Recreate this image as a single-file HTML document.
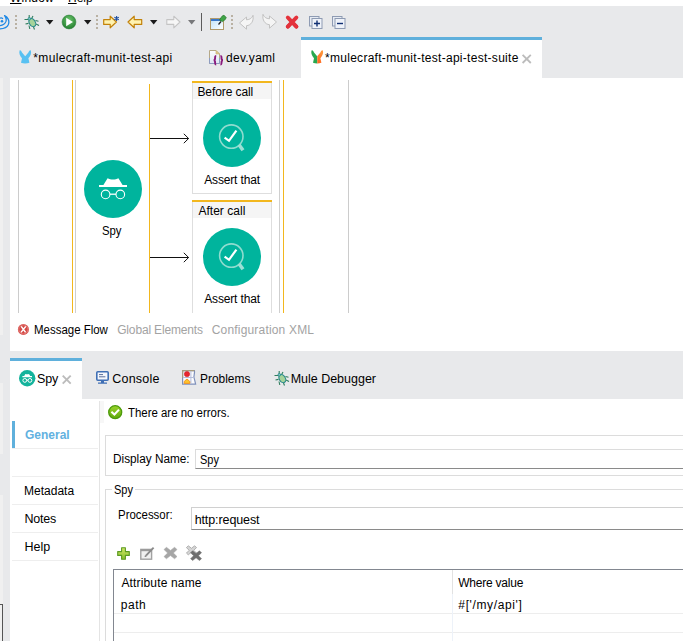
<!DOCTYPE html>
<html><head><meta charset="utf-8"><title>Studio</title>
<style>
html,body{margin:0;padding:0}
body{width:683px;height:641px;overflow:hidden;position:relative;background:#e8e9eb;font-family:"Liberation Sans",sans-serif;font-size:12px;color:#000}
.a{position:absolute}
.t{position:absolute;white-space:nowrap;line-height:14px;height:14px;transform-origin:0 0}
.w{background:#fff}
.g{color:#a3a3a3}
svg{position:absolute;overflow:visible}
</style></head><body>
<!-- menu strip -->
<div class="a w" style="left:0;top:0;width:683px;height:6px;overflow:hidden">
 <span class="t" style="left:10px;top:-9px;letter-spacing:0.2px"><u style="text-decoration-skip-ink:none">W</u>indow</span>
 <span class="t" style="left:68px;top:-9px"><u style="text-decoration-skip-ink:none">H</u>elp</span>
</div>
<!-- editor tab active -->
<div class="a w" style="left:301px;top:37px;width:241px;height:41px"></div>
<div class="a" style="left:301px;top:37px;width:241px;height:3px;background:#5fb0dc"></div>
<!-- editor area -->
<div class="a w" style="left:10px;top:78px;width:673px;height:273px"></div>
<div class="a" style="left:0;top:78px;width:3px;height:257px;background:#f0f0f0"></div>
<div class="a" style="left:0;top:383px;width:3px;height:71px;background:#f0f0f0"></div>
<div class="a" style="left:0;top:495px;width:3px;height:109px;background:#f0f0f0"></div>
<div class="a" style="left:0;top:604px;width:2px;height:38px;background:#f0f0f0;border-top:1px solid #555;border-right:1px solid #555"></div>
<!-- bottom panel -->
<div class="a w" style="left:10px;top:358px;width:72px;height:41px"></div>
<div class="a" style="left:10px;top:358px;width:72px;height:3px;background:#5fb0dc"></div>
<div class="a w" style="left:10px;top:399px;width:673px;height:242px"></div>

<!-- canvas lines -->
<div class="a" style="left:18px;top:80px;width:1px;height:233px;background:#cccccc"></div>
<div class="a" style="left:72px;top:80px;width:1px;height:233px;background:#f2b71e"></div>
<div class="a" style="left:75px;top:80px;width:1px;height:233px;background:#cfcfcf"></div>
<div class="a" style="left:149px;top:84px;width:1px;height:229px;background:#f2b71e"></div>
<div class="a" style="left:279px;top:80px;width:1px;height:233px;background:#cfcfcf"></div>
<div class="a" style="left:283px;top:80px;width:1px;height:233px;background:#f2b71e"></div>
<div class="a" style="left:348px;top:80px;width:1px;height:233px;background:#cccccc"></div>
<!-- boxes -->
<div class="a" style="left:192px;top:81px;width:78px;height:112px;border:1px solid #dedede;border-top:none;background:#fff"></div>
<div class="a" style="left:192px;top:81px;width:80px;height:2px;background:#f2b71e"></div>
<div class="a" style="left:193px;top:83px;width:78px;height:16px;background:#f5f5f5"></div>
<div class="a" style="left:192px;top:200px;width:78px;height:113px;border:1px solid #dedede;border-top:none;border-bottom:none;background:#fff"></div>
<div class="a" style="left:192px;top:200px;width:80px;height:2px;background:#f2b71e"></div>
<div class="a" style="left:193px;top:202px;width:78px;height:16px;background:#f5f5f5"></div>
<!-- arrows -->
<svg style="left:149px;top:130px" width="44" height="16"><path d="M1 8.5H39.6M34.8 3.8L39.6 8.5L34.8 13.2" fill="none" stroke="#111" stroke-width="1"/></svg>
<svg style="left:149px;top:249px" width="44" height="16"><path d="M1 8.5H39.6M34.8 3.8L39.6 8.5L34.8 13.2" fill="none" stroke="#111" stroke-width="1"/></svg>
<!-- circles -->
<div class="a" style="left:84px;top:160px;width:58px;height:58px;border-radius:50%;background:#00b49d"></div>
<div class="a" style="left:203px;top:109px;width:58px;height:58px;border-radius:50%;background:#00b49d"></div>
<div class="a" style="left:203px;top:228px;width:58px;height:58px;border-radius:50%;background:#00b49d"></div>
<!-- sidebar -->
<div class="a" style="left:12px;top:421px;width:3px;height:27px;background:#5fb0dc"></div>
<div class="a" style="left:12px;top:448px;width:86px;height:1px;background:#eeeeee"></div>
<div class="a" style="left:12px;top:476px;width:86px;height:1px;background:#eeeeee"></div>
<div class="a" style="left:12px;top:504px;width:86px;height:1px;background:#eeeeee"></div>
<div class="a" style="left:12px;top:532px;width:86px;height:1px;background:#eeeeee"></div>
<div class="a" style="left:12px;top:560px;width:86px;height:1px;background:#eeeeee"></div>
<div class="a" style="left:99px;top:401px;width:1px;height:240px;background:#e4e4e4"></div>
<!-- form -->
<div class="a" style="left:105px;top:435px;width:600px;height:39px;border:1px solid #dcdcdc"></div>
<div class="a" style="left:195px;top:449px;width:500px;height:18px;border:1px solid #dcdcdc;border-bottom:1px solid #8a8a8a"></div>
<div class="a" style="left:105px;top:489px;width:600px;height:200px;border:1px solid #dcdcdc"></div>
<div class="a w" style="left:112px;top:483px;width:23px;height:14px"></div>
<div class="a" style="left:191px;top:507px;width:500px;height:21px;border:1px solid #d0d0d0;border-bottom:1px solid #8a8a8a"></div>
<!-- table -->
<div class="a" style="left:113px;top:569px;width:600px;height:100px;border:1px solid #828790"></div>
<div class="a" style="left:114px;top:613px;width:600px;height:1px;background:#ededed"></div>
<div class="a" style="left:114px;top:632px;width:600px;height:1px;background:#ededed"></div>
<div class="a" style="left:452px;top:570px;width:1px;height:24px;background:#e2e2e2"></div><div class="a" style="left:452px;top:594px;width:1px;height:50px;background:#edf2f9"></div>

<!-- toolbar -->
<svg style="left:0;top:14px" width="11" height="16"><path d="M4.6 1.6C7.6 3 9.8 6.6 8.4 10.4 7.2 13.2 3.6 14.8-1 14.8M-1 11.6C2 11.6 5 10.2 6 7.4 6.6 5.4 5.8 3.2 4.6 1.6" fill="none" stroke="#1e88e5" stroke-width="1.3" stroke-linecap="round"/><circle cx="2" cy="7.2" r="1.3" fill="#1e88e5"/><path d="M-1 4.6C.6 3.6 2 3.8 3 4.8" fill="none" stroke="#1e88e5" stroke-width="1.1"/></svg>
<div class="a" style="left:15px;top:15px;width:2px;height:2px;background:#b9b1a3"></div><div class="a" style="left:15px;top:19px;width:2px;height:2px;background:#b9b1a3"></div><div class="a" style="left:15px;top:23px;width:2px;height:2px;background:#b9b1a3"></div><div class="a" style="left:15px;top:27px;width:2px;height:2px;background:#b9b1a3"></div>
<svg style="left:24px;top:14px" width="16" height="17"><g stroke="#2f7d5c" stroke-width="1.1" fill="none"><path d="M5.2 1v3.5M9 2L7.6 4.6M0.5 5.5h4M11.5 6.5l3 .7M1.5 10l3-.6M12 10l3 1.5M5 11.5l.8 3.5M9.5 13l1 2.5"/></g><ellipse cx="8.3" cy="8.6" rx="3" ry="4.4" transform="rotate(-32 8.3 8.6)" fill="#a5d39a" stroke="#2a8a8c" stroke-width="1.1"/><circle cx="5.3" cy="4.8" r="1.3" fill="#7ec8c8" stroke="#2a8a8c" stroke-width=".8"/></svg>
<svg style="left:46px;top:20px" width="8" height="5"><path d="M0 0H7.4L3.7 4.4Z" fill="#1a1a1a"/></svg>
<svg style="left:62px;top:15px" width="14" height="14"><defs><radialGradient id="pg" cx=".5" cy=".35" r=".7"><stop offset="0" stop-color="#6cc56c"/><stop offset="1" stop-color="#1f7a2c"/></radialGradient></defs><circle cx="7" cy="7" r="6.9" fill="url(#pg)" stroke="#2a8038" stroke-width=".6"/><path d="M4.2 2.8L11 7L4.2 11.2Z" fill="#fff"/></svg>
<svg style="left:84px;top:20px" width="8" height="5"><path d="M0 0H7.4L3.7 4.4Z" fill="#1a1a1a"/></svg><div class="a" style="left:96px;top:15px;width:2px;height:2px;background:#b9b1a3"></div><div class="a" style="left:96px;top:19px;width:2px;height:2px;background:#b9b1a3"></div><div class="a" style="left:96px;top:23px;width:2px;height:2px;background:#b9b1a3"></div><div class="a" style="left:96px;top:27px;width:2px;height:2px;background:#b9b1a3"></div>
<svg style="left:103px;top:15px" width="18" height="14"><path d="M.7 4.6H7.2V1.2L13.4 7L7.2 12.8V9.4H.7Z" fill="#fff3b0" stroke="#c2820a" stroke-width="1.2" stroke-linejoin="round"/><g stroke="#1f4fa0" stroke-width="1.1"><path d="M13.6 1v5M11.4 2.2l4.4 2.6M15.8 2.2l-4.4 2.6"/></g></svg>
<svg style="left:127px;top:15px" width="16" height="14"><path d="M14.7 4.6H7.2V1.2L1 7L7.2 12.8V9.4H14.7Z" fill="#fff3b0" stroke="#c2820a" stroke-width="1.2" stroke-linejoin="round"/></svg>
<svg style="left:150px;top:20px" width="8" height="5"><path d="M0 0H7.4L3.7 4.4Z" fill="#1a1a1a"/></svg>
<svg style="left:166px;top:15px" width="16" height="14"><path d="M.8 4.6H7.8V1.2L14 7L7.8 12.8V9.4H.8Z" fill="#f6f6f6" stroke="#c4c4c4" stroke-width="1.1" stroke-linejoin="round"/></svg>
<svg style="left:188px;top:20px" width="8" height="5"><path d="M0 0H7.4L3.7 4.4Z" fill="#77787a"/></svg>
<div class="a" style="left:201px;top:13px;width:1px;height:18px;background:#5c5c5c"></div>
<svg style="left:210px;top:14px" width="18" height="17"><defs><linearGradient id="wg" x1="0" y1="0" x2="1" y2="1"><stop offset="0" stop-color="#bfe3fb"/><stop offset="1" stop-color="#ffffff"/></linearGradient></defs><rect x=".5" y="4.5" width="13" height="11" fill="url(#wg)" stroke="#b19a6a"/><rect x="1" y="5" width="12" height="2" fill="#3b78c9"/><path d="M8.5 10.5L11 7.5" stroke="#222" stroke-width="1.2"/><path d="M9.5 6L12 2.2 14 1.2 16.2 3.6 15.2 5.6 12.4 7.6Z" fill="#3fa447" stroke="#2a7d30" stroke-width=".8"/></svg>
<div class="a" style="left:231px;top:15px;width:2px;height:2px;background:#b9b1a3"></div><div class="a" style="left:231px;top:19px;width:2px;height:2px;background:#b9b1a3"></div><div class="a" style="left:231px;top:23px;width:2px;height:2px;background:#b9b1a3"></div><div class="a" style="left:231px;top:27px;width:2px;height:2px;background:#b9b1a3"></div>
<svg style="left:239px;top:14px" width="16" height="17"><path d="M.5 9L7.5 3V5.8C11 5.6 13.2 4 14 1.3 15 7 12 11.4 7.5 11.7V15.2Z" fill="#f5f5f5" stroke="#c2c2c2" stroke-width="1" stroke-linejoin="round"/></svg>
<svg style="left:260.5px;top:13px" width="16" height="17"><path d="M15.5 9L8.5 3V5.8C5 5.6 2.8 4 2 1.3 1 7 4 11.4 8.5 11.7V15.2Z" fill="#f5f5f5" stroke="#c2c2c2" stroke-width="1" stroke-linejoin="round"/></svg>
<svg style="left:285px;top:15px" width="15" height="14"><defs><linearGradient id="rg" x1="0" y1="0" x2="0" y2="1"><stop offset="0" stop-color="#f26a6a"/><stop offset="1" stop-color="#d81e2c"/></linearGradient></defs><path d="M2.8 2.5L11.4 11.6M11.4 2.5L2.8 11.6" stroke="url(#rg)" stroke-width="4" stroke-linecap="round"/><path d="M2.8 2.5L11.4 11.6M11.4 2.5L2.8 11.6" stroke="#e3323c" stroke-width="3.4" stroke-linecap="round"/></svg>
<svg style="left:309px;top:16px" width="14" height="13"><rect x=".5" y=".5" width="9.5" height="9.5" fill="#e6ebf3" stroke="#8e9bb3"/><rect x="3" y="2.5" width="10" height="10" fill="#eef2f9" stroke="#8e9bb3"/><path d="M5 7.5H11M8 4.5V10.5" stroke="#0f2f73" stroke-width="1.4"/></svg>
<svg style="left:332px;top:16px" width="14" height="13"><rect x=".5" y=".5" width="9.5" height="9.5" fill="#e6ebf3" stroke="#8e9bb3"/><rect x="3" y="2.5" width="10" height="10" fill="#eef2f9" stroke="#8e9bb3"/><path d="M5 7.5H11" stroke="#0f2f73" stroke-width="1.4"/></svg>

<!-- tab icons -->
<svg style="left:18.5px;top:50px" width="13" height="14"><path d="M.6 .5C1.5 0 2.2 1 3 2.5L6.2 6.3 9.4 2.5C10.2 1 11 0 11.8 .5 12.7 3 11.5 6 9.4 8.2L10.4 12.8C8 13.8 4.4 13.8 2 12.8L3 8.2C.9 6-.3 3 .6 .5Z" fill="#58c1f2"/></svg>
<svg style="left:209px;top:50px" width="16" height="16"><defs><linearGradient id="fg" x1="0" y1="0" x2="0" y2="1"><stop offset="0" stop-color="#fbfcff"/><stop offset="1" stop-color="#dfe6f4"/></linearGradient></defs><path d="M.5 .5H7L10.5 4V13.5H.5Z" fill="url(#fg)" stroke="#b5a887" stroke-width="1"/><path d="M.5 8V13.5H10.5V8" fill="none" stroke="#8d9cc0" stroke-width="1"/><path d="M7 .5V4H10.5Z" fill="#e0c88c" stroke="#c8ad6e" stroke-width=".6"/><path d="M7.2 6C5.8 6 6.2 7.6 6 9 5.9 9.8 5.2 10.2 4.6 10.2 5.2 10.2 5.9 10.6 6 11.4 6.2 12.8 5.8 14.6 7.2 14.6M11.4 6C12.8 6 12.4 7.6 12.6 9 12.7 9.8 13.4 10.2 14 10.2 13.4 10.2 12.7 10.6 12.6 11.4 12.4 12.8 12.8 14.6 11.4 14.6" fill="none" stroke="#8a1a7c" stroke-width="1.9"/></svg>
<svg style="left:310.6px;top:50px" width="13" height="14"><defs><clipPath id="cl"><rect x="-1" y="-1" width="7.3" height="16"/></clipPath><clipPath id="cr"><rect x="6.3" y="-1" width="8" height="16"/></clipPath><linearGradient id="og" x1="0" y1="1" x2="1" y2="0"><stop offset="0" stop-color="#ff4a10"/><stop offset="1" stop-color="#ffa040"/></linearGradient></defs><path d="M.6 .5C1.5 0 2.2 1 3 2.5L6.2 6.3 9.4 2.5C10.2 1 11 0 11.8 .5 12.7 3 11.5 6 9.4 8.2L10.4 12.8C8 13.8 4.4 13.8 2 12.8L3 8.2C.9 6-.3 3 .6 .5Z" fill="#27a84e" clip-path="url(#cl)"/><path d="M.6 .5C1.5 0 2.2 1 3 2.5L6.2 6.3 9.4 2.5C10.2 1 11 0 11.8 .5 12.7 3 11.5 6 9.4 8.2L10.4 12.8C8 13.8 4.4 13.8 2 12.8L3 8.2C.9 6-.3 3 .6 .5Z" fill="url(#og)" clip-path="url(#cr)"/></svg>
<svg style="left:522px;top:54px" width="10" height="10"><path d="M.6 .8L8.8 9M8.8 .8L.6 9" stroke="#bcbcbc" stroke-width="1.8"/></svg>

<!-- canvas icons -->
<svg style="left:84px;top:160px" width="58" height="58"><path d="M15 25H43V27H15ZM19.4 25L23.6 18.3C26.5 19.9 31.5 19.9 34.4 18.3L38.6 25Z" fill="#fff"/><circle cx="21.6" cy="34.4" r="4.3" fill="none" stroke="#fff" stroke-width="1.1"/><circle cx="36.3" cy="34.4" r="4.3" fill="none" stroke="#fff" stroke-width="1.1"/><path d="M26 34.2H32" stroke="#fff" stroke-width="1.3"/></svg>
<svg style="left:203px;top:109px" width="58" height="58"><circle cx="28.3" cy="27.6" r="11.7" fill="none" stroke="#8fdccf" stroke-width="1.6"/><path d="M36 35.8L40 41.2" stroke="#9ce0d5" stroke-width="3.6"/><path d="M21.6 28.6L26 31.8 33.4 21.6" fill="none" stroke="#fff" stroke-width="2.2"/></svg><svg style="left:203px;top:228px" width="58" height="58"><circle cx="28.3" cy="27.6" r="11.7" fill="none" stroke="#8fdccf" stroke-width="1.6"/><path d="M36 35.8L40 41.2" stroke="#9ce0d5" stroke-width="3.6"/><path d="M21.6 28.6L26 31.8 33.4 21.6" fill="none" stroke="#fff" stroke-width="2.2"/></svg>
<!-- msgflow error icon -->
<svg style="left:18px;top:324px" width="11" height="11"><circle cx="5.4" cy="5.4" r="5.5" fill="#d44a46"/><circle cx="5.4" cy="5.4" r="4.6" fill="none" stroke="#e88a86" stroke-width=".8"/><path d="M3.2 2.4L7.6 8.4M7.8 2.4L3 8.4" stroke="#fff" stroke-width="1.5"/></svg>
<!-- bottom tab icons -->
<svg style="left:18.8px;top:369.6px" width="17" height="17"><circle cx="8.2" cy="8.2" r="8.2" fill="#14b39c"/><path d="M3.4 6.1H13V7.3H3.4ZM5 6.2L6.4 3.9C7.4 4.5 9 4.5 10 3.9L11.4 6.2Z" fill="#fff"/><circle cx="5.8" cy="10.4" r="1.9" fill="none" stroke="#fff" stroke-width="1"/><circle cx="10.9" cy="10.4" r="1.9" fill="none" stroke="#fff" stroke-width="1"/><path d="M7.6 10.2H9.1" stroke="#fff" stroke-width="1"/></svg>
<svg style="left:62px;top:375px" width="10" height="10"><path d="M.7 .7L8.7 8.7M8.7 .7L.7 8.7" stroke="#bcbcbc" stroke-width="1.9"/></svg>
<svg style="left:96px;top:371px" width="14" height="14"><rect x=".8" y=".8" width="11.4" height="8.4" rx="1" fill="#f4f7fd" stroke="#3f6fb5" stroke-width="1.6"/><path d="M3 3.6H7M3 5.8H9.4" stroke="#5a6f9a" stroke-width="1"/><path d="M5 10H8V11.6H11V12.8H2V11.6H5Z" fill="#3f6fb5"/></svg>
<svg style="left:182px;top:370px" width="15" height="15"><path d="M.6 .6H12.4C13.2 3 11.2 5.4 12.2 8.4 12.8 10.4 13.2 12.4 13.6 14.2H.6Z" fill="#fbfcfe" stroke="#7e90bb" stroke-width="1.2"/><path d="M.6 8V.6H12.4" stroke="#a89c7c" stroke-width="1.2" fill="none"/><path d="M1.2 7.5H12M8.9 1.2V13.6" stroke="#b4bedb" stroke-width="1"/><circle cx="5" cy="4.1" r="2.7" fill="#e8252d" stroke="#c41a22" stroke-width=".5"/><path d="M5 9L7.8 11.4V13.4H2.2V11.4Z" fill="#fdc52c" stroke="#f08c1a" stroke-width=".9" stroke-linejoin="round"/></svg>
<svg style="left:273.5px;top:369.5px" width="16" height="17"><g stroke="#2f7d5c" stroke-width="1.1" fill="none"><path d="M5.2 1v3.5M9 2L7.6 4.6M0.5 5.5h4M11.5 6.5l3 .7M1.5 10l3-.6M12 10l3 1.5M5 11.5l.8 3.5M9.5 13l1 2.5"/></g><ellipse cx="8.3" cy="8.6" rx="3" ry="4.4" transform="rotate(-32 8.3 8.6)" fill="#a5d39a" stroke="#2a8a8c" stroke-width="1.1"/><circle cx="5.3" cy="4.8" r="1.3" fill="#7ec8c8" stroke="#2a8a8c" stroke-width=".8"/></svg>
<!-- ok icon -->
<svg style="left:107.8px;top:404.8px" width="15" height="15"><defs><linearGradient id="okg" x1="0" y1="0" x2="0" y2="1"><stop offset="0" stop-color="#9ad42a"/><stop offset="1" stop-color="#5fa80e"/></linearGradient></defs><circle cx="7.2" cy="7.2" r="6.5" fill="url(#okg)" stroke="#4c9a0a" stroke-width="1.3"/><path d="M3.4 6.8L6.4 9.5 11 4.6" fill="none" stroke="#fff" stroke-width="2.1"/></svg>

<!-- light strip -->
<div class="a" style="left:100px;top:401px;width:4px;height:22px;background:#f7f7f7"></div>
<!-- table toolbar icons -->
<svg style="left:117px;top:547px" width="14" height="14"><defs><linearGradient id="plg" x1="0" y1="0" x2="0" y2="1"><stop offset="0" stop-color="#d2e868"/><stop offset="1" stop-color="#86bf2c"/></linearGradient></defs><path d="M4.6 .7H8.4V4.6H12.3V8.4H8.4V12.3H4.6V8.4H.7V4.6H4.6Z" fill="url(#plg)" stroke="#5c9a24" stroke-width="1.1" stroke-linejoin="round"/></svg>
<svg style="left:140px;top:546px" width="16" height="15"><rect x=".8" y="3.4" width="10.8" height="9.8" fill="#f0f0f0" stroke="#a2a2a2" stroke-width="1.4"/><path d="M.8 4.2H11.6" stroke="#9a9a9a" stroke-width="2"/><path d="M6 9.6L13.6 1.6" stroke="#8a8a8a" stroke-width="1.9"/><path d="M4.6 11L5 9 6.8 10.4Z" fill="#777"/></svg>
<svg style="left:164px;top:547px" width="14" height="13"><path d="M2.4 .2L6.5 3.4 10.6 .2 13 2.6 9.4 6 13 9.6 10.6 11.8 6.5 8.6 2.4 11.8 0 9.6 3.6 6 0 2.6Z" fill="#a6a6a6" stroke="#a6a6a6" stroke-width=".5" stroke-linejoin="round"/></svg>
<svg style="left:186px;top:545px" width="16" height="17"><g transform="translate(.4 .6) scale(.78)"><path d="M2.4 .2L6.5 3.4 10.6 .2 13 2.6 9.4 6 13 9.6 10.6 11.8 6.5 8.6 2.4 11.8 0 9.6 3.6 6 0 2.6Z" fill="#d4d4d4" stroke="#9a9a9a" stroke-width=".9"/></g><g transform="translate(4.6 5.6) scale(.84)"><path d="M2.4 .2L6.5 3.4 10.6 .2 13 2.6 9.4 6 13 9.6 10.6 11.8 6.5 8.6 2.4 11.8 0 9.6 3.6 6 0 2.6Z" fill="#6f6f6f" stroke="#6f6f6f" stroke-width=".6" stroke-linejoin="round"/></g></svg>
<span class="t" style="left:33.31px;top:50.84px;letter-spacing:0.345px;">*mulecraft-munit-test-api</span>
<span class="t" style="left:226.00px;top:50.84px;letter-spacing:0.267px;">dev.yaml</span>
<span class="t" style="left:325.01px;top:50.84px;letter-spacing:0.284px;">*mulecraft-munit-test-api-test-suite</span>
<span class="t" style="left:197.42px;top:84.84px;letter-spacing:-0.082px;">Before call</span>
<span class="t" style="left:204.18px;top:172.84px;letter-spacing:-0.145px;">Assert that</span>
<span class="t" style="left:198.38px;top:203.84px;letter-spacing:0.038px;">After call</span>
<span class="t" style="left:204.18px;top:291.84px;letter-spacing:-0.145px;">Assert that</span>
<span class="t" style="left:102.49px;top:223.84px;transform:scaleX(0.9444);">Spy</span>
<span class="t" style="left:34.46px;top:322.84px;transform:scaleX(0.9552);">Message Flow</span>
<span class="t" style="left:117.20px;top:322.84px;letter-spacing:-0.158px;color:#a3a3a3">Global Elements</span>
<span class="t" style="left:211.79px;top:322.84px;letter-spacing:0.176px;color:#a3a3a3">Configuration XML</span>
<span class="t" style="left:37.03px;top:372.47px;letter-spacing:-0.177px;font-size:12.5px">Spy</span>
<span class="t" style="left:112.17px;top:372.47px;letter-spacing:0.253px;font-size:12.5px">Console</span>
<span class="t" style="left:200.22px;top:372.47px;transform:scaleX(0.9548);font-size:12.5px">Problems</span>
<span class="t" style="left:290.67px;top:372.47px;letter-spacing:-0.011px;font-size:12.5px">Mule Debugger</span>
<span class="t" style="left:127.94px;top:406.47px;transform:scaleX(0.9139);font-size:12.5px">There are no errors.</span>
<span class="t" style="left:24.81px;top:428.17px;transform:scaleX(0.9587);font-weight:bold;color:#62b1e0;font-size:12.5px">General</span>
<span class="t" style="left:24.21px;top:483.97px;transform:scaleX(0.9609);font-size:12.5px">Metadata</span>
<span class="t" style="left:24.47px;top:512.07px;letter-spacing:-0.195px;font-size:12.5px">Notes</span>
<span class="t" style="left:24.47px;top:539.87px;letter-spacing:0.011px;font-size:12.5px">Help</span>
<span class="t" style="left:112.53px;top:452.47px;transform:scaleX(0.9429);font-size:12.5px">Display Name:</span>
<span class="t" style="left:199.90px;top:452.77px;transform:scaleX(0.8781);font-size:12.5px">Spy</span>
<span class="t" style="left:113.80px;top:483.47px;transform:scaleX(0.8829);font-size:12.5px">Spy</span>
<span class="t" style="left:117.76px;top:508.37px;transform:scaleX(0.9152);font-size:12.5px">Processor:</span>
<span class="t" style="left:194.63px;top:512.57px;letter-spacing:-0.096px;font-size:12.5px">http:request</span>
<span class="t" style="left:121.38px;top:576.24px;letter-spacing:0.162px;">Attribute name</span>
<span class="t" style="left:120.63px;top:597.84px;letter-spacing:0.598px;">path</span>
<span class="t" style="left:458.15px;top:576.24px;letter-spacing:-0.219px;">Where value</span>
<span class="t" style="left:458.35px;top:597.84px;letter-spacing:0.627px;">#[&#x27;/my/api&#x27;]</span>
</body></html>
